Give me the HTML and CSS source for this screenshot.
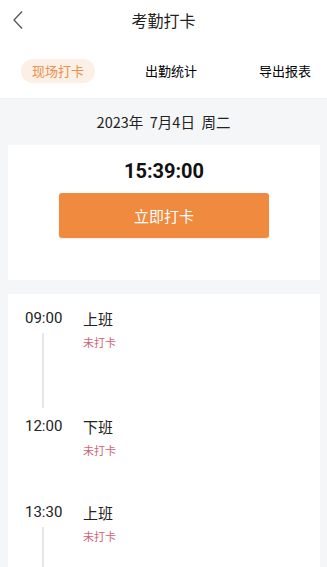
FILE: index.html
```html
<!DOCTYPE html>
<html lang="zh">
<head>
<meta charset="utf-8">
<link rel="stylesheet" href="styles.css">
</head>
<body>
<div class="top">
  <div class="nav">
    <svg class="back" width="12" height="20" viewBox="0 0 12 20"><path d="M10 1.5 L2 10 L10 18.5" fill="none" stroke="#555" stroke-width="1.3" stroke-linejoin="miter"/></svg>
    <div class="title">考勤打卡</div>
  </div>
  <div class="tabs">
    <div class="tab active">现场打卡</div>
    <div class="tab mid">出勤统计</div>
    <div class="tab last">导出报表</div>
  </div>
</div>
<div class="date">2023年&nbsp;&nbsp;7月4日&nbsp;&nbsp;周二</div>
<div class="card punch">
  <div class="clock">15:39:00</div>
  <button class="btn">立即打卡</button>
</div>
<div class="card list">
  <div class="item">
    <div class="row"><span class="time">09:00</span><span class="label">上班</span></div>
    <div class="body tall"><div class="rail"><div class="line"></div></div><div class="status">未打卡</div></div>
  </div>
  <div class="item">
    <div class="row"><span class="time">12:00</span><span class="label">下班</span></div>
    <div class="body"><div class="rail"></div><div class="status">未打卡</div></div>
  </div>
  <div class="item">
    <div class="row"><span class="time">13:30</span><span class="label">上班</span></div>
    <div class="body tall"><div class="rail"><div class="line"></div></div><div class="status">未打卡</div></div>
  </div>
</div>
</body>
</html>
```
FILE: styles.css
```css
* { box-sizing: border-box; }
html, body { margin: 0; padding: 0; }
body {
  background: #f5f6f8;
  font-family: Roboto, "Noto Sans CJK SC", sans-serif;
  color: #222;
  width: 327px;
  height: 567px;
  overflow: hidden;
}
.top {
  background: #fff;
  height: 99px;
  border-bottom: 1px solid #eef0f2;
}
.nav {
  position: relative;
  height: 40px;
  display: flex;
  align-items: center;
  justify-content: center;
}
.back {
  position: absolute;
  left: 12px;
  top: 10px;
}
.title {
  font-family: "Noto Sans CJK SC", sans-serif;
  font-size: 16px;
  color: #222;
}
.tabs {
  display: flex;
  align-items: center;
  padding: 19px 0 0 21px;
}
.tab {
  font-family: "Noto Sans CJK SC", sans-serif;
  font-size: 13px;
  font-weight: 400;
  height: 24px;
  line-height: 24px;
  color: #000;
}
.tab.mid { margin-left: 50px; }
.tab.last { margin-left: 62px; }
.tab.active {
  background: #fcefe6;
  color: #e8924f;
  border-radius: 12px;
  padding: 0 11px;
}
.date {
  text-align: center;
  font-family: "Noto Sans CJK SC", sans-serif;
  font-size: 14.5px;
  line-height: 20px;
  padding-top: 13px;
  height: 46px;
}
.card {
  background: #fff;
  margin: 0 7px 0 8px;
}
.punch {
  height: 135px;
  padding-top: 14px;
  display: flex;
  flex-direction: column;
  align-items: center;
}
.clock {
  font-family: Roboto, sans-serif;
  font-weight: 700;
  font-size: 20px;
  line-height: 24px;
  color: #111;
}
.btn {
  margin-top: 10px;
  width: 210px;
  height: 45px;
  border: none;
  border-radius: 3px;
  background: #ef8a3e;
  color: #fff;
  font-family: "Noto Sans CJK SC", sans-serif;
  font-size: 15px;
  box-shadow: 0 1px 2px rgba(0,0,0,0.08);
}
.list {
  margin-top: 14px;
  padding: 12px 0 0 0;
  height: 273px;
  overflow: hidden;
}
.row {
  display: flex;
  align-items: center;
  height: 24px;
}
.time {
  width: 75px;
  padding-left: 17px;
  font-size: 15px;
  color: #222;
}
.label {
  font-family: "Noto Sans CJK SC", sans-serif;
  font-size: 15px;
  color: #222;
}
.body {
  display: flex;
  height: 62px;
}
.body.tall { height: 84px; }
.rail {
  width: 75px;
  padding-left: 34px;
}
.line {
  width: 2px;
  height: 75px;
  margin-top: 3px;
  background: #e6e6e6;
}
.status {
  font-family: "Noto Sans CJK SC", sans-serif;
  font-size: 11px;
  line-height: 16px;
  margin-top: 4px;
  color: #cf6277;
}
```
